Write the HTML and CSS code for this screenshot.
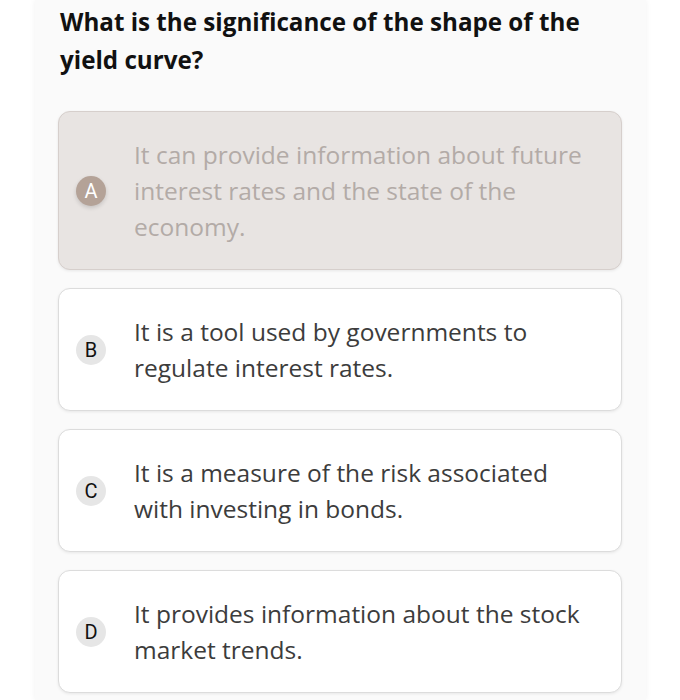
FILE: index.html
```html
<!DOCTYPE html>
<html>
<head>
<meta charset="utf-8">
<link rel="stylesheet" href="styles.css">
</head>
<body>
<div class="page">
  <div class="card">
    <h1 class="question">What is the significance of the shape of the yield curve?</h1>
    <div class="options">
      <div class="option selected">
        <span class="badge">A</span>
        <span class="text">It can provide information about future interest rates and the state of the economy.</span>
      </div>
      <div class="option">
        <span class="badge">B</span>
        <span class="text">It is a tool used by governments to regulate interest rates.</span>
      </div>
      <div class="option">
        <span class="badge">C</span>
        <span class="text">It is a measure of the risk associated with investing in bonds.</span>
      </div>
      <div class="option">
        <span class="badge">D</span>
        <span class="text">It provides information about the stock market trends.</span>
      </div>
    </div>
  </div>
</div>
</body>
</html>
```
FILE: styles.css
```css
html, body {
  margin: 0;
  padding: 0;
  background: #ffffff;
}
.page {
  width: 680px;
  height: 700px;
  overflow: hidden;
  display: flex;
  justify-content: center;
}
.card {
  width: 611px;
  margin-left: 1px;
  background: #fafafa;
  box-shadow: 0 0 6px rgba(0,0,0,0.06);
  padding: 3px 24px 0 23px;
  box-sizing: border-box;
  font-family: "Open Sans", "Noto Sans", sans-serif;
}
.question {
  margin: 0;
  padding-left: 2px;
  font-size: 24.2px;
  line-height: 38px;
  font-weight: 700;
  color: #111;
  padding-right: 20px;
}
.options {
  margin-top: 32px;
  display: flex;
  flex-direction: column;
  gap: 18px;
}
.option {
  display: flex;
  align-items: center;
  background: #ffffff;
  border: 1px solid #dcdcdc;
  border-radius: 12px;
  box-shadow: 0 1px 3px rgba(0,0,0,0.08);
  padding: 25px 30px 24px 17px;
  box-sizing: border-box;
}
.badge {
  flex: none;
  width: 30px;
  height: 30px;
  border-radius: 50%;
  background: #e6e6e6;
  color: #111;
  font-family: Roboto, "Liberation Sans", sans-serif;
  font-size: 20px;
  display: flex;
  align-items: center;
  justify-content: center;
  margin-right: 28px;
}
.text {
  font-size: 24.5px;
  line-height: 36px;
  color: #3c3c3c;
}
.option.selected {
  background: #e8e4e2;
  border-color: #d6cfcc;
}
.option.selected .badge {
  background: #b4a297;
  color: #ffffff;
  box-shadow: 0 2px 4px rgba(0,0,0,0.15);
}
.option.selected .text {
  color: #b3aba7;
}
```
